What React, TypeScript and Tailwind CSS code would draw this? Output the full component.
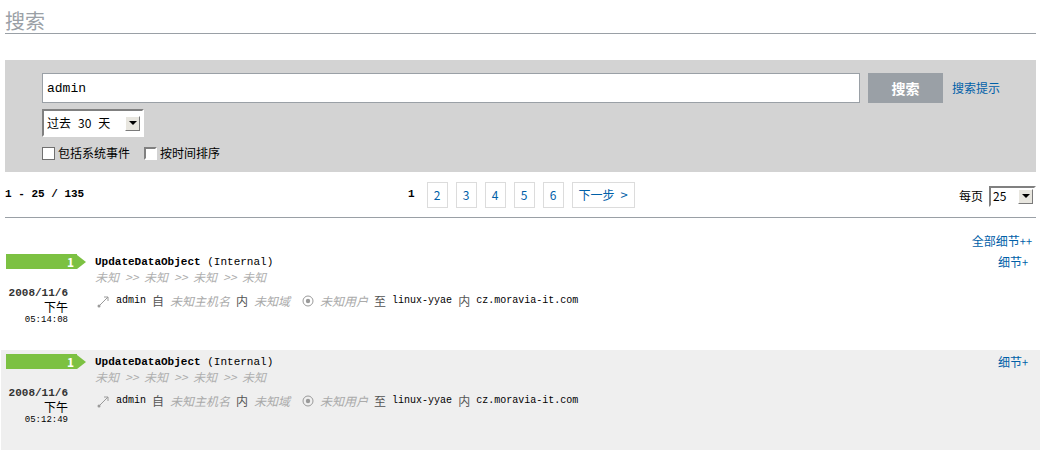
import React from "react";

const cjk = "font-['Noto_Sans_CJK_SC','Noto_Sans',sans-serif]";
const mono = "font-['Liberation_Mono','Noto_Sans_CJK_SC',monospace]";

interface EventRow {
  date: string;
  time: string;
  shaded: boolean;
}

const rows: EventRow[] = [
  { date: "2008/11/6", time: "05:14:08", shaded: false },
  { date: "2008/11/6", time: "05:12:49", shaded: true },
];

const DropArrow = () => (
  <span className="flex h-[15px] w-[15px] items-center justify-center border border-t-white border-l-white border-r-[#7a7a7a] border-b-[#7a7a7a] bg-[#e8e6df]">
    <span className="h-0 w-0 border-x-[4px] border-t-[4px] border-x-transparent border-t-black" />
  </span>
);

const ActorIcon = () => (
  <svg width="13" height="13" viewBox="0 0 13 13" className="shrink-0">
    <line x1="2" y1="11" x2="11" y2="2" stroke="#9a9a9a" strokeWidth="1" />
    <path d="M7 2 H11 V6" fill="none" stroke="#9a9a9a" strokeWidth="1" />
    <circle cx="2" cy="11" r="1.5" fill="#9a9a9a" />
  </svg>
);

const TargetIcon = () => (
  <svg width="12" height="12" viewBox="0 0 12 12" className="shrink-0">
    <circle cx="6" cy="6" r="5" fill="none" stroke="#9a9a9a" strokeWidth="1" />
    <circle cx="6" cy="6" r="2.2" fill="#9a9a9a" />
  </svg>
);

const Row = ({ row }: { row: EventRow }) => {
  const crumbs = ["未知", "未知", "未知", "未知"];
  return (
    <div className={`flex h-[100px] pl-[5px] pr-[12px] pt-[4px] ${row.shaded ? "bg-[#efefef]" : ""}`}>
      <div className="flex w-[89px] shrink-0 flex-col">
        <div className="flex items-center">
          <div className={`flex h-[15px] w-[71px] items-center justify-end bg-[#7cc142] pr-[3px] text-[12px] font-bold text-white ${cjk}`}>
            1
          </div>
          <span className="h-0 w-0 border-y-[7.5px] border-l-[9px] border-y-transparent border-l-[#7cc142]" />
        </div>
        <div className="mt-[17px] flex w-[62px] flex-col items-end">
          <span className={`text-[11px] font-bold leading-[14px] text-[#333] ${mono}`}>{row.date}</span>
          <span className={`text-[12px] leading-[14px] text-black ${cjk}`}>下午</span>
          <span className={`text-[9px] leading-[13px] text-black ${mono}`}>{row.time}</span>
        </div>
      </div>
      <div className="flex flex-1 flex-col">
        <div className="flex items-start justify-between">
          <div className="flex flex-col">
            <div className={`pt-[1px] text-[11px] leading-[14px] text-black ${mono}`}>
              <span className="font-bold">UpdateDataObject</span> (Internal)
            </div>
            <div className={`flex items-center gap-[6px] text-[12px] italic leading-[16px] text-[#b0b0b0] ${cjk}`}>
              {crumbs.map((c, i) => (
                <React.Fragment key={i}>
                  {i > 0 && <span className="w-[13px] text-[12px]">&gt;&gt;</span>}
                  <span>{c}</span>
                </React.Fragment>
              ))}
            </div>
          </div>
          <a className={`pt-[1px] text-[12px] leading-[14px] text-[#0060a8] ${cjk}`}>
            细节<span className="text-[11px]">+</span>
          </a>
        </div>
        <div className={`mt-[9px] flex items-center gap-[6px] pl-[2px] text-[12px] leading-[14px] ${cjk}`}>
          <ActorIcon />
          <span className={`text-[10px] text-black ${mono}`}>admin</span>
          <span className="text-[#555]">自</span>
          <span className="italic text-[#aaa]">未知主机名</span>
          <span className="text-[#555]">内</span>
          <span className="italic text-[#aaa]">未知域</span>
          <span className="ml-[6px]"><TargetIcon /></span>
          <span className="italic text-[#aaa]">未知用户</span>
          <span className="text-[#555]">至</span>
          <span className={`text-[10px] text-black ${mono}`}>linux-yyae</span>
          <span className="text-[#555]">内</span>
          <span className={`text-[10px] text-black ${mono}`}>cz.moravia-it.com</span>
        </div>
      </div>
    </div>
  );
};

const App = () => {
  const pages = ["2", "3", "4", "5", "6"];

  return (
    <div className={`h-[451px] w-[1048px] overflow-hidden bg-white ${cjk}`}>
      <div className="pl-[5px] pr-[12px]">
        <h1 className="border-b border-[#9aa0a6] pt-[9px] text-[20px] leading-[24px] text-[#9aa0a6]">搜索</h1>

        <div className="mt-[26px] h-[112px] bg-[#d3d3d3] pl-[37px] pt-[13px]">
          <div className="flex items-center">
            <input
              className={`h-[30px] w-[818px] border border-[#9aa0a6] bg-white px-[4px] text-[13px] text-black outline-none ${mono}`}
              defaultValue="admin"
            />
            <button className="ml-[8px] h-[30px] w-[75px] bg-[#9aa0a6] text-[14px] font-bold text-white">搜索</button>
            <a className="ml-[9px] text-[12px] text-[#0060a8]">搜索提示</a>
          </div>
          <div className="mt-[6px] flex h-[28px] w-[102px] items-center justify-between border-2 border-t-[#808080] border-l-[#808080] border-r-white border-b-white bg-white pl-[3px] pr-[2px]">
            <span className="flex gap-[7px] text-[12px] text-black">
              <span>过去</span>
              <span>30</span>
              <span>天</span>
            </span>
            <DropArrow />
          </div>
          <div className="mt-[7px] flex items-center text-[12px] text-black">
            <span className="h-[13px] w-[13px] border border-[#707070] bg-white" />
            <span className="ml-[3px]">包括系统事件</span>
            <span className="ml-[14px] h-[13px] w-[13px] border-2 border-t-[#808080] border-l-[#808080] border-r-white border-b-white bg-white" />
            <span className="ml-[3px]">按时间排序</span>
          </div>
        </div>

        <div className="flex h-[46px] items-center justify-between border-b border-[#9aa0a6]">
          <span className={`w-[140px] text-[11px] font-bold text-black ${mono}`}>1 - 25 / 135</span>
          <div className="ml-[263px] flex items-center gap-[8px]">
            <span className={`mr-[4px] text-[11px] font-bold text-black ${mono}`}>1</span>
            {pages.map((p) => (
              <a
                key={p}
                className="flex h-[26px] w-[21px] items-center justify-center border border-[#dcdcdc] text-[12px] text-[#0060a8]"
              >
                {p}
              </a>
            ))}
            <a className="flex h-[26px] w-[63px] items-center justify-center gap-[6px] border border-[#dcdcdc] text-[12px] text-[#0060a8]">
              下一步 <span className="text-[13px]">&gt;</span>
            </a>
          </div>
          <div className="ml-auto flex items-center gap-[6px] pt-[3px]">
            <span className="text-[12px] text-black">每页</span>
            <div className="flex h-[21px] w-[47px] items-center justify-between border-2 border-t-[#808080] border-l-[#808080] border-r-white border-b-white bg-white pl-[2px] pr-[1px]">
              <span className="text-[12px] text-black">25</span>
              <DropArrow />
            </div>
          </div>
        </div>

        <div className="flex h-[32px] items-end justify-end pb-[1px] pr-[4px]">
          <a className="text-[12px] leading-[16px] text-[#0060a8]">
            全部细节<span className="text-[11px]">++</span>
          </a>
        </div>
      </div>

      <div className="ml-[1px] w-[1039px]">
        {rows.map((r, i) => (
          <Row key={i} row={r} />
        ))}
      </div>
    </div>
  );
};

export default App;
